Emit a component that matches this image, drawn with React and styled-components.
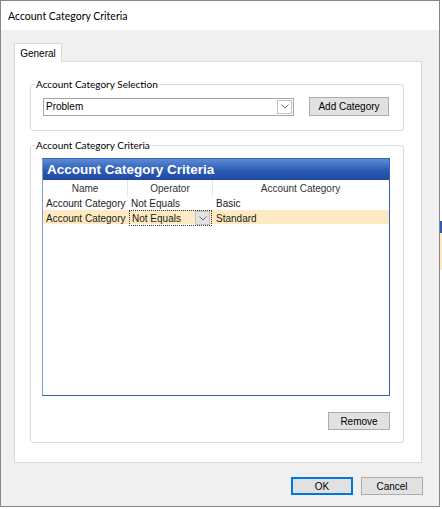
import styled, { createGlobalStyle } from "styled-components";

const GlobalStyle = createGlobalStyle`
  html, body {
    margin: 0;
    padding: 0;
    background: #ffffff;
  }
  body {
    width: 442px;
    height: 509px;
    overflow: hidden;
    font-family: "Liberation Sans", Arial, sans-serif;
    color: #000;
  }
`;

const Screen = styled.div`
  display: flex;
  width: 442px;
  height: 509px;
`;

const Window = styled.div`
  width: 440px;
  height: 507px;
  box-sizing: border-box;
  border: 1px solid #858585;
  background: #f0f0f0;
  display: flex;
  flex-direction: column;
`;

const SideStrip = styled.div`
  width: 2px;
  display: flex;
  flex-direction: column;
  padding-top: 221px;
`;

const StripBlock = styled.div`
  height: ${(p) => p.$h}px;
  background: ${(p) => p.$c};
`;

const TitleBar = styled.div`
  height: 29px;
  background: #ffffff;
  display: flex;
  align-items: center;
  padding-left: 7px;
  font-family: Lato, "Noto Sans", sans-serif;
  font-size: 10.5px;
  color: #000;
`;

const Body = styled.div`
  padding: 13px 17px 0 13px;
  display: flex;
  flex-direction: column;
`;

const TabStrip = styled.div`
  display: flex;
`;

const Tab = styled.div`
  width: 48px;
  height: 19px;
  box-sizing: border-box;
  border: 1px solid #d9d9d9;
  border-bottom: none;
  background: #ffffff;
  margin-bottom: -1px;
  position: relative;
  z-index: 1;
  display: flex;
  align-items: center;
  justify-content: center;
  font-size: 10px;
  padding-top: 1px;
`;

const TabPanel = styled.div`
  height: 402px;
  box-sizing: border-box;
  border: 1px solid #d9d9d9;
  background: #ffffff;
  padding: 15px 17px 0 15px;
  display: flex;
  flex-direction: column;
`;

const GroupBox = styled.fieldset`
  margin: ${(p) => p.$gap || 0}px 0 0 0;
  padding: ${(p) => p.$pt}px ${(p) => p.$pr}px ${(p) => p.$pb}px 0;
  border: 1px solid #dcdcdc;
  border-radius: 3px;
  min-inline-size: 0;
`;

const Legend = styled.legend`
  margin-left: 4px;
  padding: 0 1px;
  font-family: Lato, "Noto Sans", sans-serif;
  font-size: 10px;
  line-height: 14px;
  color: #000;
`;

const SelectRow = styled.div`
  display: flex;
  align-items: center;
  gap: 15px;
  margin-left: 12px;
`;

const Combo = styled.div`
  width: ${(p) => p.$w}px;
  height: 18px;
  box-sizing: border-box;
  border: 1px solid #a5a5a5;
  background: #ffffff;
  display: flex;
  align-items: center;
  font-size: 10px;
`;

const ComboText = styled.span`
  flex: 1;
  padding-left: 2px;
`;

const ComboArrow = styled.span`
  width: 15px;
  height: 14px;
  margin-right: 1px;
  box-sizing: border-box;
  border: 1px solid #c2c2c2;
  background: ${(p) => p.$bg || "#ffffff"};
  display: flex;
  align-items: center;
  justify-content: center;
`;

const Button = styled.button`
  width: ${(p) => p.$w}px;
  height: ${(p) => p.$h || 18}px;
  box-sizing: border-box;
  padding: 0;
  border: 1px solid ${(p) => (p.$default ? "#0078d7" : "#adadad")};
  box-shadow: ${(p) => (p.$default ? "inset 0 0 0 1px #0078d7" : "none")};
  background: #e1e1e1;
  font-family: "Liberation Sans", Arial, sans-serif;
  font-size: 10px;
  color: #000;
`;

const Grid = styled.div`
  margin-left: 11px;
  width: 348px;
  height: 238px;
  box-sizing: border-box;
  border: 1px solid #3560b3;
  border-left-color: #7f9dd6;
  background: #ffffff;
  display: flex;
  flex-direction: column;
`;

const Caption = styled.div`
  height: 21px;
  background: linear-gradient(#5e8bd5, #2c5bb4 55%, #1d49a3);
  color: #ffffff;
  font-weight: bold;
  font-size: 13.5px;
  display: flex;
  align-items: center;
  padding-left: 4px;
`;

const Row = styled.div`
  display: grid;
  grid-template-columns: 85px 85px 1fr;
  height: ${(p) => p.$h || 13}px;
  background: ${(p) => (p.$selected ? "#fde9c2" : "#ffffff")};
  font-size: 10px;
`;

const HeadCell = styled.div`
  display: flex;
  align-items: center;
  justify-content: center;
  color: #333;
  border-right: 1px solid ${(p) => (p.$last ? "transparent" : "#e6e6e6")};
`;

const Cell = styled.div`
  display: flex;
  align-items: center;
  padding-left: 3px;
  color: #1a1a1a;
  white-space: nowrap;
  overflow: hidden;
`;

const EditCell = styled.div`
  display: flex;
  align-items: center;
  margin: 0 1px 0 1px;
  border: 1px dotted #333;
  color: #1a1a1a;
`;

const RemoveRow = styled.div`
  display: flex;
  justify-content: flex-end;
  margin-top: 16px;
  padding-right: 1px;
`;

const Footer = styled.div`
  display: flex;
  justify-content: flex-end;
  gap: 8px;
  padding: 14px 16px 0 0;
`;

function Chevron() {
  return (
    <svg width="8" height="5" viewBox="0 0 8 5">
      <path d="M0.5 0.5 L4 4 L7.5 0.5" fill="none" stroke="#6d6d6d" strokeWidth="1" />
    </svg>
  );
}

export default function App() {
  return (
    <>
      <GlobalStyle />
      <Screen>
        <Window>
          <TitleBar>Account Category Criteria</TitleBar>
          <Body>
            <TabStrip>
              <Tab>General</Tab>
            </TabStrip>
            <TabPanel>
              <GroupBox $pt={6} $pr={12} $pb={14}>
                <Legend>Account Category Selection</Legend>
                <SelectRow>
                  <Combo $w={251}>
                    <ComboText>Problem</ComboText>
                    <ComboArrow>
                      <Chevron />
                    </ComboArrow>
                  </Combo>
                  <Button $w={80} $h={19}>
                    Add Category
                  </Button>
                </SelectRow>
              </GroupBox>

              <GroupBox $gap={7} $pt={6} $pr={12} $pb={12}>
                <Legend>Account Category Criteria</Legend>
                <Grid>
                  <Caption>Account Category Criteria</Caption>
                  <Row $h={17}>
                    <HeadCell>Name</HeadCell>
                    <HeadCell>Operator</HeadCell>
                    <HeadCell $last>Account Category</HeadCell>
                  </Row>
                  <Row>
                    <Cell>Account Category</Cell>
                    <Cell>Not Equals</Cell>
                    <Cell>Basic</Cell>
                  </Row>
                  <Row $selected $h={14}>
                    <Cell>Account Category</Cell>
                    <EditCell>
                      <ComboText>Not Equals</ComboText>
                      <ComboArrow $bg="#e3e3e3">
                        <Chevron />
                      </ComboArrow>
                    </EditCell>
                    <Cell>Standard</Cell>
                  </Row>
                </Grid>
                <RemoveRow>
                  <Button $w={62} $h={18}>
                    Remove
                  </Button>
                </RemoveRow>
              </GroupBox>
            </TabPanel>
          </Body>
          <Footer>
            <Button $w={62} $default>
              OK
            </Button>
            <Button $w={62}>Cancel</Button>
          </Footer>
        </Window>
        <SideStrip>
          <StripBlock $h={12} $c="#2d5cb8" />
          <StripBlock $h={37} $c="#fde9c2" />
        </SideStrip>
      </Screen>
    </>
  );
}
